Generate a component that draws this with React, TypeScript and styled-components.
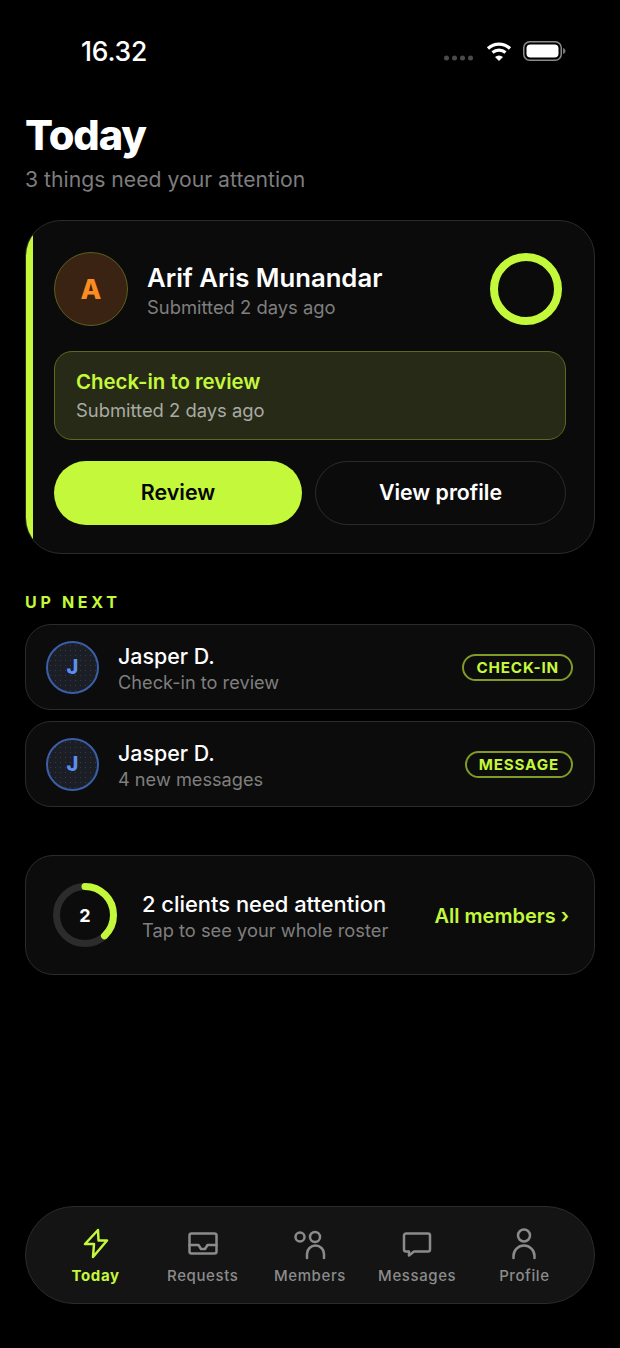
import React from "react";
import styled, { createGlobalStyle } from "styled-components";

const lime = "#c4f83a";

const Global = createGlobalStyle`
  html, body { margin: 0; padding: 0; background: #000; }
  body { font-family: Inter, "Liberation Sans", sans-serif; -webkit-font-smoothing: antialiased; }
  * { box-sizing: border-box; }
`;

const Page = styled.div`
  width: 620px;
  height: 1348px;
  background: #000;
  color: #fff;
  display: flex;
  flex-direction: column;
  padding: 0 25px 44px;
  overflow: hidden;
`;

const StatusBar = styled.div`
  height: 70px;
  padding: 36px 29px 0 56px;
  display: flex;
  align-items: flex-start;
  justify-content: space-between;
`;
const Clock = styled.div`
  font-size: 26.5px;
  line-height: 30px;
  font-weight: 500;
  letter-spacing: -0.2px;
`;
const StatusIcons = styled.div`
  display: flex;
  align-items: center;
  gap: 11px;
  margin-top: 4px;
`;

const Title = styled.h1`
  margin: 40px 0 0;
  font-size: 41.5px;
  line-height: 50px;
  font-weight: 800;
  letter-spacing: -1.1px;
`;
const Subtitle = styled.div`
  margin-top: 5px;
  font-size: 21.2px;
  line-height: 28px;
  color: #7d7d7d;
  font-weight: 400;
`;

const HeroCard = styled.section`
  position: relative;
  overflow: hidden;
  margin-top: 27px;
  height: 334px;
  border: 1px solid #2b2b2b;
  border-radius: 36px;
  background: #0b0b0b;
  padding: 31px 28px 0 28px;
  &::before {
    content: "";
    position: absolute;
    left: 0;
    top: 0;
    bottom: 0;
    width: 7px;
    background: ${lime};
  }
`;
const HeroTop = styled.div`
  display: flex;
  align-items: center;
`;
const Avatar = styled.div<{ $size: number; $bg: string; $line: string; $color: string; $font: number }>`
  width: ${(p) => p.$size}px;
  height: ${(p) => p.$size}px;
  border-radius: 50%;
  background: ${(p) => p.$bg};
  border: 1px solid ${(p) => p.$line};
  color: ${(p) => p.$color};
  font-size: ${(p) => p.$font}px;
  font-weight: 800;
  display: flex;
  align-items: center;
  justify-content: center;
  flex-shrink: 0;
`;
const BlueAvatar = styled(Avatar)`
  border-width: 2px;
  background-color: #1b1e24;
  background-image: radial-gradient(#343a46 0.7px, transparent 0.8px);
  background-size: 5px 5px;
`;
const HeroText = styled.div`
  margin-left: 19px;
  padding-top: 3px;
  flex: 1;
`;
const HeroName = styled.div`
  font-size: 25.7px;
  line-height: 32px;
  font-weight: 600;
`;
const Muted = styled.div<{ $size: number; $gap?: number }>`
  color: #7f7f7f;
  font-size: ${(p) => p.$size}px;
  line-height: 24px;
  margin-top: ${(p) => p.$gap ?? 0}px;
`;
const Ring = styled.div`
  width: 72px;
  height: 72px;
  border-radius: 50%;
  border: 8px solid ${lime};
  margin-right: 4px;
  flex-shrink: 0;
`;

const ReviewBox = styled.div`
  margin-top: 25px;
  height: 89px;
  border: 1px solid #5d6a1e;
  border-radius: 18px;
  background: #262a17;
  padding: 17px 21px;
`;
const ReviewTitle = styled.div`
  color: ${lime};
  font-size: 20.4px;
  line-height: 26px;
  font-weight: 600;
`;
const ReviewSub = styled.div`
  color: #a9aaa4;
  font-size: 18.4px;
  line-height: 24px;
  margin-top: 3px;
`;
const Actions = styled.div`
  margin-top: 21px;
  display: grid;
  grid-template-columns: 248px 251px;
  gap: 13px;
`;
const PrimaryButton = styled.button`
  height: 64px;
  padding: 0 0 2px;
  border: 0;
  border-radius: 32px;
  background: ${lime};
  color: #050505;
  font: 600 21.4px Inter, sans-serif;
`;
const SecondaryButton = styled.button`
  height: 64px;
  padding: 0 0 2px;
  border: 1px solid #2b2b2b;
  border-radius: 32px;
  background: transparent;
  color: #fff;
  font: 600 21.3px Inter, sans-serif;
`;

const SectionLabel = styled.div`
  margin-top: 38px;
  color: ${lime};
  font-size: 16px;
  line-height: 20px;
  font-weight: 700;
  letter-spacing: 3.7px;
`;
const RowList = styled.div`
  margin-top: 12px;
  display: flex;
  flex-direction: column;
  gap: 11px;
`;
const Row = styled.div`
  height: 86px;
  border: 1px solid #2b2b2b;
  border-radius: 26px;
  background: #0c0c0c;
  padding: 0 21px 0 20px;
  display: flex;
  align-items: center;
`;
const RowText = styled.div`
  margin-left: 19px;
  padding-top: 2px;
  flex: 1;
`;
const RowName = styled.div`
  font-size: 21.4px;
  line-height: 28px;
  font-weight: 500;
`;
const Badge = styled.div`
  height: 27px;
  border: 2px solid #7f9a25;
  border-radius: 14px;
  padding: 0 12px;
  color: ${lime};
  font-size: 15.2px;
  line-height: 24px;
  font-weight: 700;
  letter-spacing: 0.85px;
`;

const AttentionCard = styled.section`
  margin-top: 48px;
  height: 120px;
  border: 1px solid #2b2b2b;
  border-radius: 28px;
  background: #0c0c0c;
  padding: 0 25px 0 27px;
  display: flex;
  align-items: center;
`;
const Donut = styled.div`
  position: relative;
  width: 64px;
  height: 64px;
  flex-shrink: 0;
`;
const DonutValue = styled.div`
  position: absolute;
  inset: 0;
  display: flex;
  align-items: center;
  justify-content: center;
  font-size: 18px;
  font-weight: 700;
`;
const AttentionText = styled.div`
  margin-left: 25px;
  padding-top: 2px;
  flex: 1;
`;
const AttentionTitle = styled.div`
  font-size: 21.9px;
  line-height: 28px;
  font-weight: 500;
`;
const AllMembers = styled.div`
  color: ${lime};
  font-size: 20px;
  font-weight: 600;
  padding-top: 2px;
`;

const Nav = styled.nav`
  margin-top: auto;
  height: 98px;
  border: 1px solid #2b2b2b;
  border-radius: 49px;
  background: #141414;
  padding: 0 16px;
  display: grid;
  grid-template-columns: repeat(5, 1fr);
`;
const NavItem = styled.div<{ $active?: boolean }>`
  display: flex;
  flex-direction: column;
  align-items: center;
  padding-top: 21px;
  color: ${(p) => (p.$active ? lime : "#8b8b8b")};
  font-size: 15px;
  line-height: 20px;
  font-weight: ${(p) => (p.$active ? 700 : 500)};
  letter-spacing: 0.6px;
`;
const NavIcon = styled.svg`
  width: 34px;
  height: 32px;
  margin-bottom: 6px;
  fill: none;
  stroke: currentColor;
  stroke-width: 2.500;
  stroke-linejoin: round;
  stroke-linecap: round;
`;

const items = [
  {
    label: "Today",
    active: true,
    icon: <path d="M19 2 6 16h9l-1 13 14-16.500h-8.500z" />,
  },
  {
    label: "Requests",
    icon: (
      <>
        <rect x="3.500" y="5.500" width="27" height="20" rx="2" />
        <path d="M3.500 17h9l2.500 4h4l2.500-4h9" />
      </>
    ),
  },
  {
    label: "Members",
    icon: (
      <>
        <circle cx="7" cy="9" r="4.500" />
        <circle cx="22" cy="9" r="5" />
        <path d="M14 30v-4a8.500 8.500 0 0 1 17 0v4" />
      </>
    ),
  },
  {
    label: "Messages",
    icon: (
      <path d="M6 5.500h22a2 2 0 0 1 2 2v14a2 2 0 0 1-2 2H14l-5 4v-4H6a2 2 0 0 1-2-2v-14a2 2 0 0 1 2-2z" />
    ),
  },
  {
    label: "Profile",
    icon: (
      <>
        <circle cx="17" cy="7.500" r="6" />
        <path d="M6.500 30v-2a10.500 10.500 0 0 1 21 0v2" />
      </>
    ),
  },
];

const upNext = [
  { name: "Jasper D.", sub: "Check-in to review", tag: "CHECK-IN" },
  { name: "Jasper D.", sub: "4 new messages", tag: "MESSAGE" },
];

export default function App() {
  return (
    <Page>
      <Global />
      <StatusBar>
        <Clock>16.32</Clock>
        <StatusIcons>
          <svg width="31" height="8" viewBox="0 0 31 8" style={{ marginTop: 14 }}>
            {[2.5, 10.5, 18.5, 26.5].map((x) => (
              <circle key={x} cx={x} cy="4" r="2.500" fill="#4a4a4a" />
            ))}
          </svg>
          <svg width="26" height="20" viewBox="0 0 26 20" fill="none" stroke="#fff" strokeWidth="3.200">
            <path d="M2 7.500a16 16 0 0 1 22 0" />
            <path d="M6.500 11.500a10 10 0 0 1 13 0" />
            <path d="M13 20l-4-4a6 6 0 0 1 8 0z" fill="#fff" stroke="none" />
          </svg>
          <svg width="43" height="20" viewBox="0 0 43 20" fill="none">
            <rect x="0.750" y="0.750" width="37.500" height="18.500" rx="6" stroke="#8c8c8c" strokeWidth="1.500" />
            <rect x="3.500" y="3.500" width="32" height="13" rx="4" fill="#fff" />
            <path d="M40 7v6c1.500-.5 2.500-1.500 2.500-3S41.500 7.500 40 7z" fill="#777" />
          </svg>
        </StatusIcons>
      </StatusBar>

      <Title>Today</Title>
      <Subtitle>3 things need your attention</Subtitle>

      <HeroCard>
        <HeroTop>
          <Avatar $size={74} $bg="#3a2312" $line="#5c611c" $color="#fb8c22" $font={27}>A</Avatar>
          <HeroText>
            <HeroName>Arif Aris Munandar</HeroName>
            <Muted $size={18.4} $gap={1}>Submitted 2 days ago</Muted>
          </HeroText>
          <Ring />
        </HeroTop>
        <ReviewBox>
          <ReviewTitle>Check-in to review</ReviewTitle>
          <ReviewSub>Submitted 2 days ago</ReviewSub>
        </ReviewBox>
        <Actions>
          <PrimaryButton>Review</PrimaryButton>
          <SecondaryButton>View profile</SecondaryButton>
        </Actions>
      </HeroCard>

      <SectionLabel>UP NEXT</SectionLabel>
      <RowList>
        {upNext.map((r) => (
          <Row key={r.tag}>
            <BlueAvatar $size={53} $bg="#1b1e24" $line="#3a5fa8" $color="#5d8df0" $font={20}>J</BlueAvatar>
            <RowText>
              <RowName>{r.name}</RowName>
              <Muted $size={18.2}>{r.sub}</Muted>
            </RowText>
            <Badge>{r.tag}</Badge>
          </Row>
        ))}
      </RowList>

      <AttentionCard>
        <Donut>
          <svg width="64" height="64" viewBox="0 0 64 64" fill="none">
            <circle cx="32" cy="32" r="28.500" stroke="#2c2c2c" strokeWidth="7" />
            <circle
              cx="32"
              cy="32"
              r="28.500"
              stroke={lime}
              strokeWidth="7"
              strokeLinecap="round"
              strokeDasharray="68 179"
              transform="rotate(-90 32 32)"
            />
          </svg>
          <DonutValue>2</DonutValue>
        </Donut>
        <AttentionText>
          <AttentionTitle>2 clients need attention</AttentionTitle>
          <Muted $size={18.3}>Tap to see your whole roster</Muted>
        </AttentionText>
        <AllMembers>All members ›</AllMembers>
      </AttentionCard>

      <Nav>
        {items.map((it) => (
          <NavItem key={it.label} $active={it.active}>
            <NavIcon viewBox="0 0 34 32">{it.icon}</NavIcon>
            {it.label}
          </NavItem>
        ))}
      </Nav>
    </Page>
  );
}
